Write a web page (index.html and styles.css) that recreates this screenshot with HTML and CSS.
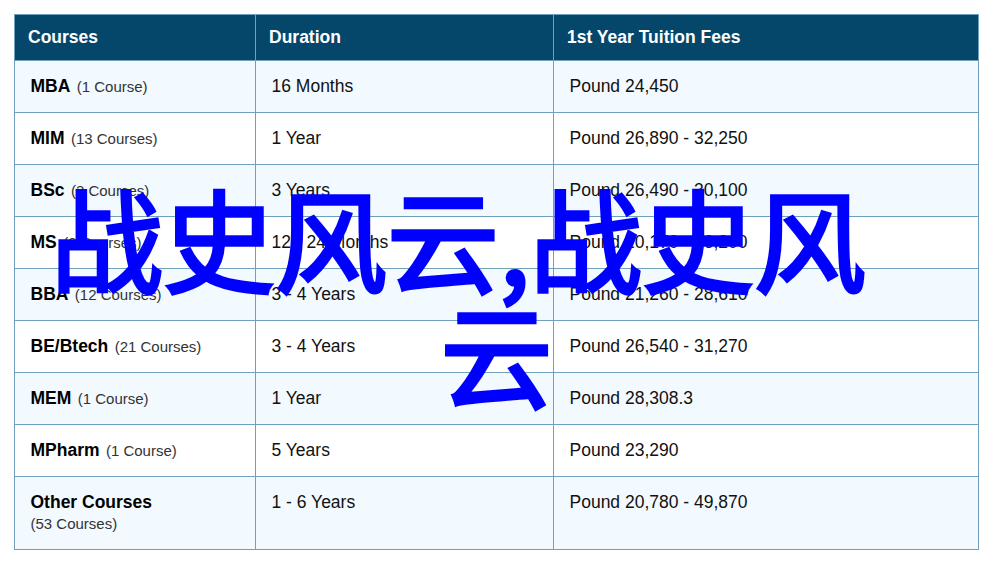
FILE: index.html
```html
<!DOCTYPE html>
<html lang="zh">
<head>
<meta charset="utf-8">
<title>战史风云</title>
<link rel="stylesheet" href="styles.css">
</head>
<body>
<main class="page">
<table class="fees">
<colgroup><col class="c1"><col class="c2"><col class="c3"></colgroup>
<thead><tr><th>Courses</th><th>Duration</th><th>1st Year Tuition Fees</th></tr></thead>
<tbody>
<tr><td><b>MBA</b> <small>(1 Course)</small></td><td>16 Months</td><td>Pound 24,450</td></tr>
<tr><td><b>MIM</b> <small>(13 Courses)</small></td><td>1 Year</td><td>Pound 26,890 - 32,250</td></tr>
<tr><td><b>BSc</b> <small>(3 Courses)</small></td><td>3 Years</td><td>Pound 26,490 - 30,100</td></tr>
<tr><td><b>MS</b> <small>(6 Courses)</small></td><td>12 - 24 Months</td><td>Pound 20,170 - 26,200</td></tr>
<tr><td><b>BBA</b> <small>(12 Courses)</small></td><td>3 - 4 Years</td><td>Pound 21,260 - 28,610</td></tr>
<tr><td><b>BE/Btech</b> <small>(21 Courses)</small></td><td>3 - 4 Years</td><td>Pound 26,540 - 31,270</td></tr>
<tr><td><b>MEM</b> <small>(1 Course)</small></td><td>1 Year</td><td>Pound 28,308.3</td></tr>
<tr><td><b>MPharm</b> <small>(1 Course)</small></td><td>5 Years</td><td>Pound 23,290</td></tr>
<tr class="tall"><td><b>Other Courses</b><br><small>(53 Courses)</small></td><td>1 - 6 Years</td><td>Pound 20,780 - 49,870</td></tr>
</tbody>
</table>
<h1 class="overlay"><span class="line one">战史风云,战史风</span><span class="line">云</span></h1>
</main>
</body>
</html>
```
FILE: styles.css
```css
* { box-sizing: border-box; }
html, body { margin: 0; background: #fff; }
body { font-family: "Liberation Sans", Arial, sans-serif; color: #111; }
.page { position: relative; width: 993px; height: 570px; padding: 14px 14px 0; overflow: hidden; }
.fees { width: 965px; table-layout: fixed; border-collapse: collapse; font-size: 17.5px; }
.c1 { width: 241px; }
.c2 { width: 298px; }
.fees th, .fees td { border: 1px solid #6fa0bd; text-align: left; }
.fees th { height: 46px; padding: 0 14px 0 13px; background: #05476a; color: #fff; font-weight: bold; }
.fees td { height: 52px; padding: 0 16px 0 15.5px; vertical-align: middle; }
.fees tbody tr:nth-child(odd) td { background: #f2f9ff; }
.fees b { color: #000; }
.fees small { margin-left: 1.5px; font-size: 15px; color: #333; }
.fees .tall td { height: 73px; padding-top: 15px; vertical-align: top; }
.fees .tall small { margin-left: 0; line-height: 22px; }
.overlay { position: absolute; left: 0; top: 179px; width: 100%; margin: 0; font-family: "Noto Sans CJK SC", sans-serif; font-size: 112px; line-height: 115px; font-weight: 400; -webkit-text-stroke: 3.5px #00f; color: #00f; text-align: center; }
.line { display: block; white-space: nowrap; }
.one { margin-left: -76px; }
```
